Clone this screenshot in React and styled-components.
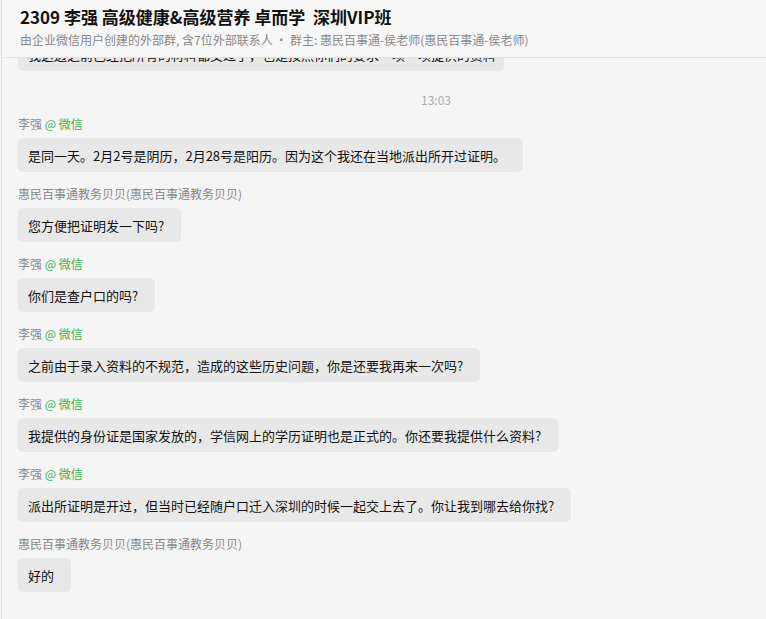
import React from "react";
import styled, { createGlobalStyle } from "styled-components";

const messages = [
  { id: 1, name: "李强", via: "微信", text: "是同一天。2月2号是阴历，2月28号是阳历。因为这个我还在当地派出所开过证明。" },
  { id: 2, name: "惠民百事通教务贝贝(惠民百事通教务贝贝)", text: "您方便把证明发一下吗?" },
  { id: 3, name: "李强", via: "微信", text: "你们是查户口的吗?" },
  { id: 4, name: "李强", via: "微信", text: "之前由于录入资料的不规范，造成的这些历史问题，你是还要我再来一次吗?" },
  { id: 5, name: "李强", via: "微信", text: "我提供的身份证是国家发放的，学信网上的学历证明也是正式的。你还要我提供什么资料?" },
  { id: 6, name: "李强", via: "微信", text: "派出所证明是开过，但当时已经随户口迁入深圳的时候一起交上去了。你让我到哪去给你找?" },
  { id: 7, name: "惠民百事通教务贝贝(惠民百事通教务贝贝)", text: "好的" },
];

const App = () => {
  return (
    <>
      <GlobalStyle />
      <Window>
        <Header>
          <Title>2309 李强 高级健康&amp;高级营养 卓而学&nbsp; 深圳VIP班</Title>
          <Subtitle>
            由企业微信用户创建的外部群, 含7位外部联系人 · 群主: 惠民百事通-侯老师(惠民百事通-侯老师)
          </Subtitle>
        </Header>
        <Chat>
          <List>
            <Bubble $cut>
              我这边之前已经把所有的材料都交过了，也是按照你们的要求一项一项提供的资料
            </Bubble>
            <Time>13:03</Time>
            {messages.map((m) => (
              <Message key={m.id}>
                <Sender>
                  {m.name}
                  {m.via && <Via> @ {m.via}</Via>}
                </Sender>
                <Bubble>{m.text}</Bubble>
              </Message>
            ))}
          </List>
        </Chat>
      </Window>
    </>
  );
};

const GlobalStyle = createGlobalStyle`
  html, body {
    margin: 0;
    padding: 0;
    height: 100%;
    background: #f5f5f5;
  }
  #root {
    height: 100%;
  }
  body {
    font-family: "Noto Sans CJK SC", "Liberation Sans", sans-serif;
  }
`;

const Window = styled.div`
  display: flex;
  flex-direction: column;
  height: 100vh;
  margin-left: 1px;
  border-left: 1px solid #e2e2e2;
  background: #f5f5f5;
  overflow: hidden;
`;

const Header = styled.div`
  height: 58px;
  flex-shrink: 0;
  box-sizing: border-box;
  padding: 5px 0 0 18px;
  background: #f7f7f7;
  border-bottom: 1px solid #e2e2e2;
`;

const Title = styled.div`
  font-size: 17px;
  font-weight: 700;
  line-height: 24px;
  color: #111;
  white-space: nowrap;
`;

const Subtitle = styled.div`
  margin-top: 2px;
  font-size: 12px;
  line-height: 18px;
  color: #888;
  white-space: nowrap;
`;

const Chat = styled.div`
  flex: 1;
  overflow: hidden;
`;

const List = styled.div`
  display: flex;
  flex-direction: column;
  align-items: flex-start;
  margin-top: -21px;
  padding: 0 16px;
`;

const Time = styled.div`
  align-self: stretch;
  margin: 20px 0 6px;
  text-align: center;
  font-size: 12px;
  line-height: 18px;
  color: #a7adb8;
  padding-left: 104px;
`;

const Message = styled.div`
  display: flex;
  flex-direction: column;
  align-items: flex-start;
  gap: 5px;
  margin-bottom: 13px;
`;

const Sender = styled.div`
  font-size: 12px;
  line-height: 18px;
  color: #888;
  white-space: nowrap;
`;

const Via = styled.span`
  color: #3cb450;
`;

const Bubble = styled.div`
  box-sizing: border-box;
  height: 34px;
  display: flex;
  align-items: center;
  padding: 0 17px 0 10px;
  border-radius: 5px;
  background: #e8e8e8;
  font-size: 13px;
  color: #111;
  white-space: nowrap;
  ${(p) => p.$cut && "width: 486px; overflow: hidden;"}
`;

export default App;
